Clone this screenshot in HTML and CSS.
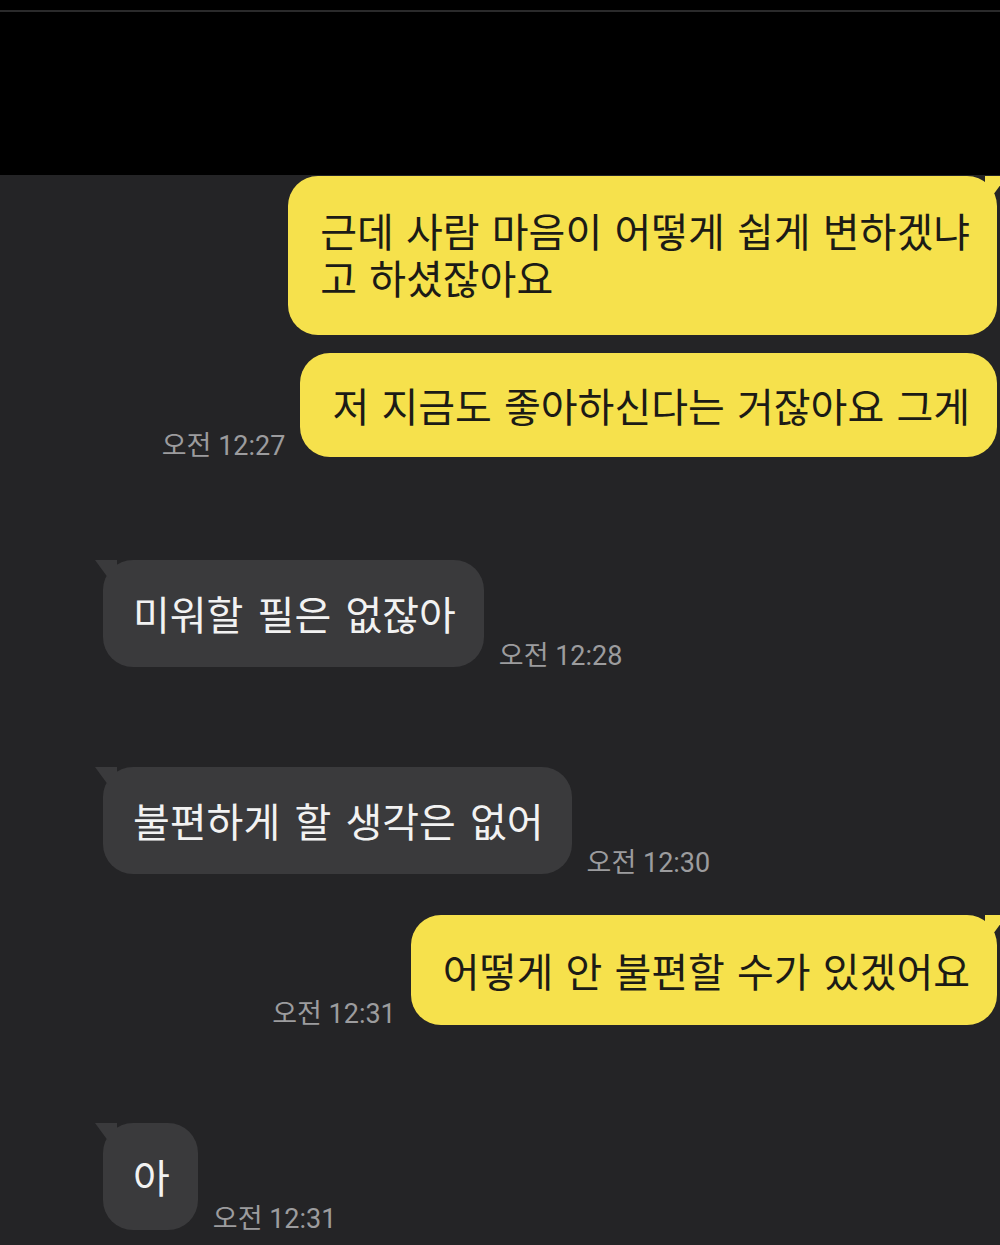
FILE: index.html
```html
<!DOCTYPE html>
<html lang="ko">
<head>
    <meta charset="UTF-8">
    <meta name="viewport" content="width=device-width, initial-scale=1.0">
    <title>채팅</title>
    <link rel="stylesheet" href="styles.css">
</head>
<body>
    <div class="top">
        <div class="status-line"></div>
    </div>

    <div class="chat">
        <div class="row sent first">
            <div class="bubble yellow multi tail">
                <div class="line">근데 사람 마음이 어떻게 쉽게 변하겠냐</div>
                <div class="line">고 하셨잖아요</div>
            </div>
        </div>

        <div class="row sent next">
            <span class="time">오전 12:27</span>
            <div class="bubble yellow">저 지금도 좋아하신다는 거잖아요 그게</div>
        </div>

        <div class="row recv gap-first">
            <div class="bubble gray tail">미워할 필은 없잖아</div>
            <span class="time">오전 12:28</span>
        </div>

        <div class="row recv gap-second">
            <div class="bubble gray tail">불편하게 할 생각은 없어</div>
            <span class="time">오전 12:30</span>
        </div>

        <div class="row sent gap-mid">
            <span class="time">오전 12:31</span>
            <div class="bubble yellow tail tall">어떻게 안 불편할 수가 있겠어요</div>
        </div>

        <div class="row recv gap-last">
            <div class="bubble gray tail">아</div>
            <span class="time">오전 12:31</span>
        </div>
    </div>
</body>
</html>
```

FILE: styles.css
```css
html, body {
    margin: 0;
    padding: 0;
}

body {
    font-family: 'Noto Sans CJK KR', 'Noto Sans', sans-serif;
    background-color: #242426;
    width: 1000px;
    height: 1245px;
    overflow: hidden;
}

.top {
    height: 175px;
    background-color: #000000;
    padding-top: 10px;
    box-sizing: border-box;
}

.status-line {
    height: 2px;
    background-color: #2a2a2b;
}

.chat {
    display: flex;
    flex-direction: column;
}

.row {
    display: flex;
    align-items: flex-end;
    gap: 15px;
}

.row.sent {
    justify-content: flex-end;
    padding-right: 3px;
}

.row.recv {
    justify-content: flex-start;
    padding-left: 103px;
}

.row.first {
    margin-top: 1px;
}

.row.next {
    margin-top: 18px;
}

.row.gap-first {
    margin-top: 103px;
}

.row.gap-second {
    margin-top: 100px;
}

.row.gap-mid {
    margin-top: 41px;
}

.row.gap-last {
    margin-top: 98px;
}

.bubble {
    position: relative;
    font-size: 40px;
    line-height: 47px;
    word-spacing: 1px;
    border-radius: 30px;
    white-space: nowrap;
}

.bubble .line {
    height: 47px;
}

.bubble.yellow {
    background-color: #f6e14c;
    color: #1c1b16;
    padding: 29px 27px 28px 32px;
}

.bubble.yellow.multi {
    padding-top: 31px;
    padding-bottom: 34px;
}

.bubble.yellow.tall {
    padding-top: 32px;
    padding-bottom: 31px;
}

.bubble.gray {
    background-color: #3a3a3c;
    color: #f2f2f2;
    word-spacing: 3px;
    padding: 30px 28px 30px 30px;
}

/* small pointed tail on the first bubble of a group */
.bubble.yellow.tail::after {
    content: "";
    position: absolute;
    top: 0;
    right: -10px;
    width: 22px;
    height: 18px;
    background-color: #f6e14c;
    clip-path: polygon(0 0, 100% 0, 40% 100%, 0 100%);
}

.bubble.gray.tail::after {
    content: "";
    position: absolute;
    top: 0;
    left: -8px;
    width: 22px;
    height: 18px;
    background-color: #3a3a3c;
    clip-path: polygon(0 0, 100% 0, 100% 100%, 60% 100%);
}

.time {
    font-family: Roboto, 'Noto Sans CJK KR', sans-serif;
    font-size: 27px;
    line-height: 30px;
    color: #9c9c9e;
    margin-bottom: -4px;
    white-space: nowrap;
}
```
